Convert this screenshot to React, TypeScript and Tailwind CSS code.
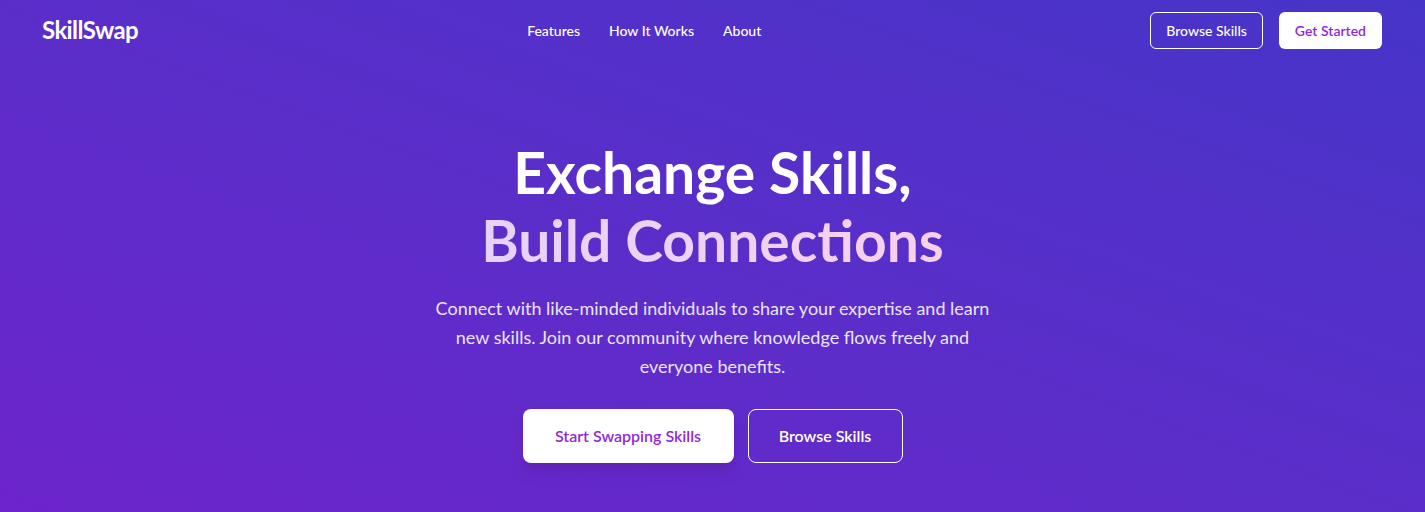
import React from 'react';

const NAV_LINKS = ['Features', 'How It Works', 'About'];

const App: React.FC = () => {
  return (
    <div
      className="min-h-[512px] w-full bg-gradient-to-tr from-[#6c24cb] to-[#4634c8] text-white"
      style={{ fontFamily: '"Segoe UI", Lato, "Noto Sans", sans-serif' }}
    >
      {/* Navbar */}
      <nav className="flex items-center justify-between pl-[42px] pr-[43px] h-[60px]">
        <div className="text-[24px] font-bold tracking-tight">SkillSwap</div>
        <div className="flex items-center gap-[29px] text-[14px] font-medium">
          {NAV_LINKS.map(link => (
            <a key={link} href="#" className="hover:text-purple-200">
              {link}
            </a>
          ))}
        </div>
        <div className="flex items-center gap-4">
          <button className="h-[37px] px-[15px] rounded-md border border-white text-[14px] font-medium">
            Browse Skills
          </button>
          <button className="h-[37px] px-[16px] rounded-md bg-white text-[#9327dc] text-[14px] font-semibold">
            Get Started
          </button>
        </div>
      </nav>

      {/* Hero */}
      <section className="flex flex-col items-center text-center pt-[78px] pb-12">
        <h1 className="text-[57px] font-bold leading-[68px]">
          Exchange Skills,
          <br />
          <span className="bg-gradient-to-r from-[#e6d2fa] to-[#f8d0ea] bg-clip-text text-transparent">
            Build Connections
          </span>
        </h1>
        <p className="mt-[20px] max-w-[575px] text-[18px] leading-[29px] text-[#ece4fb]">
          Connect with like-minded individuals to share your expertise and learn new skills. Join our
          community where knowledge flows freely and everyone benefits.
        </p>
        <div className="mt-[28px] flex items-center gap-[14px]">
          <button className="h-[54px] w-[211px] rounded-lg bg-white text-[#9327dc] text-[16px] font-semibold shadow-lg shadow-purple-900/30">
            Start Swapping Skills
          </button>
          <button className="h-[54px] w-[155px] rounded-lg border border-white text-[16px] font-semibold">
            Browse Skills
          </button>
        </div>
      </section>
    </div>
  );
};

export default App;
